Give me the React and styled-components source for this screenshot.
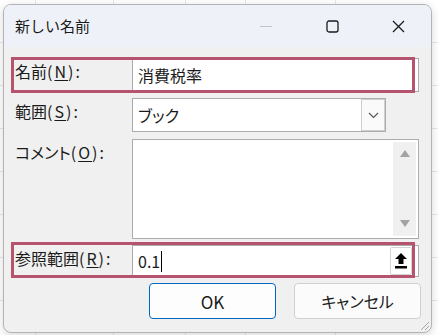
import React from 'react';
import styled, { createGlobalStyle } from 'styled-components';

const GlobalStyle = createGlobalStyle`
  html, body {
    margin: 0;
    padding: 0;
  }
  body {
    width: 438px;
    height: 335px;
    overflow: hidden;
    background-color: #fff;
    background-image:
      linear-gradient(90deg, transparent 35px, #e6e6e6 35px, #e6e6e6 36px, transparent 36px),
      linear-gradient(90deg, transparent 113px, #e6e6e6 113px, #e6e6e6 114px, transparent 114px),
      linear-gradient(90deg, transparent 185px, #e6e6e6 185px, #e6e6e6 186px, transparent 186px),
      linear-gradient(90deg, transparent 245px, #e6e6e6 245px, #e6e6e6 246px, transparent 246px),
      linear-gradient(90deg, transparent 335px, #e6e6e6 335px, #e6e6e6 336px, transparent 336px),
      repeating-linear-gradient(180deg, transparent 0, transparent 42px, #e8e8e8 42px, #e8e8e8 43px);
    font-family: "Noto Sans CJK JP", "Noto Sans", sans-serif;
    color: #1a1a1a;
  }
`;

const Dialog = styled.div`
  position: relative;
  box-sizing: border-box;
  margin: 4px 0 0 3px;
  width: 429px;
  height: 329px;
  border: 1px solid #b4b4b4;
  border-radius: 8px;
  background: #f0f0f0;
  box-shadow: 0 2px 8px rgba(0, 0, 0, 0.16);
  overflow: hidden;
  display: flex;
  flex-direction: column;
`;

const TitleBar = styled.div`
  height: 42px;
  flex: none;
  display: flex;
  align-items: center;
  background: #eef2f8;
`;

const Title = styled.div`
  flex: 1;
  padding-left: 11px;
  font-size: 15px;
  line-height: 20px;
  color: #1a1a1a;
`;

const CaptionButton = styled.div`
  width: 66px;
  height: 42px;
  display: flex;
  align-items: center;
  justify-content: center;
  color: ${(p) => (p.$disabled ? '#c4c4c4' : '#1a1a1a')};
`;

const Body = styled.div`
  flex: 1;
  padding: 11px 10px 0 11px;
  display: flex;
  flex-direction: column;
`;

const Row = styled.div`
  position: relative;
  display: flex;
  align-items: flex-start;
  height: ${(p) => p.$h}px;
  margin-top: ${(p) => p.$mt || 0}px;
`;

const Label = styled.div`
  width: 117px;
  flex: none;
  padding-top: 3px;
  font-size: 16px;
  line-height: 20px;
  white-space: nowrap;
  font-feature-settings: "palt";
`;

const Key = styled.span`
  letter-spacing: 2px;

  u {
    text-decoration: underline;
    text-underline-offset: 2px;
  }
`;

const Field = styled.div`
  box-sizing: border-box;
  width: ${(p) => p.$w || 287}px;
  height: 100%;
  border: 1px solid #acacac;
  background: #fff;
  display: flex;
  align-items: center;
  font-size: 16px;
  line-height: 20px;
`;

const Value = styled.span`
  flex: 1;
  padding-left: 5px;
  display: flex;
  align-items: center;
  font-feature-settings: "palt";
`;

const Caret = styled.span`
  display: inline-block;
  width: 1px;
  height: 21px;
  margin-left: 1px;
  background: #000;
`;

const DropButton = styled.div`
  box-sizing: border-box;
  width: 24px;
  height: 32px;
  border: 1px solid #cfcfcf;
  background: #fafafa;
  display: flex;
  align-items: center;
  justify-content: center;
`;

const ScrollBar = styled.div`
  width: 23px;
  align-self: stretch;
  margin: 2px 2px 2px 0;
  background: #f0f0f0;
  display: flex;
  flex-direction: column;
  justify-content: space-between;
  align-items: center;
  padding: 8px 0 9px;
  box-sizing: border-box;
`;

const RefButton = styled.div`
  box-sizing: border-box;
  width: 22px;
  height: 28px;
  margin-right: 6px;
  border: 1px solid #d4d4d4;
  border-radius: 2px;
  background: #fff;
  display: flex;
  align-items: center;
  justify-content: center;
`;

const Highlight = styled.div`
  position: absolute;
  left: -4px;
  top: ${(p) => p.$top}px;
  width: 404px;
  height: 36px;
  box-sizing: border-box;
  border: 3px solid #b6546f;
  pointer-events: none;
`;

const Buttons = styled.div`
  display: flex;
  justify-content: flex-end;
  gap: 18px;
  margin-top: 6px;
`;

const Button = styled.div`
  box-sizing: border-box;
  width: 127px;
  height: 36px;
  border-radius: 4px;
  border: 1px solid ${(p) => (p.$primary ? '#0067c0' : '#d0d0d0')};
  background: ${(p) => (p.$primary ? '#fdfdfd' : '#fbfbfb')};
  display: flex;
  align-items: center;
  justify-content: center;
  font-size: ${(p) => (p.$primary ? 17 : 16)}px;
  font-feature-settings: "palt";
  color: #1a1a1a;
`;

const Grip = styled.svg`
  position: absolute;
  right: 1px;
  bottom: 1px;
`;

export default function App() {
  return (
    <>
      <GlobalStyle />
      <Dialog>
        <TitleBar>
          <Title>新しい名前</Title>
          <CaptionButton $disabled>
            <svg width="12" height="12" viewBox="0 0 12 12">
              <path d="M0 6.5h12" stroke="currentColor" strokeWidth="1" />
            </svg>
          </CaptionButton>
          <CaptionButton>
            <svg width="13" height="13" viewBox="0 0 13 13">
              <rect x="1" y="1" width="11" height="11" rx="2" fill="none" stroke="currentColor" strokeWidth="1.3" />
            </svg>
          </CaptionButton>
          <CaptionButton>
            <svg width="13" height="13" viewBox="0 0 13 13">
              <path d="M1 1l11 11M12 1L1 12" stroke="currentColor" strokeWidth="1.3" />
            </svg>
          </CaptionButton>
        </TitleBar>
        <Body>
          <Row $h={34}>
            <Label>
              名前<Key>(<u>N</u>):</Key>
            </Label>
            <Field>
              <Value>消費税率</Value>
            </Field>
            <Highlight $top={-1} />
          </Row>
          <Row $h={34} $mt={6}>
            <Label>
              範囲<Key>(<u>S</u>):</Key>
            </Label>
            <Field $w={254}>
              <Value>ブック</Value>
              <DropButton>
                <svg width="11" height="7" viewBox="0 0 11 7">
                  <path d="M1 1l4.5 4.5L10 1" fill="none" stroke="#555" strokeWidth="1.2" />
                </svg>
              </DropButton>
            </Field>
          </Row>
          <Row $h={100} $mt={7}>
            <Label>
              コメント<Key>(<u>O</u>):</Key>
            </Label>
            <Field>
              <Value />
              <ScrollBar>
                <svg width="10" height="7" viewBox="0 0 10 7">
                  <path d="M5 0L10 7H0z" fill="#a3a3a3" />
                </svg>
                <svg width="10" height="7" viewBox="0 0 10 7">
                  <path d="M0 0h10L5 7z" fill="#a3a3a3" />
                </svg>
              </ScrollBar>
            </Field>
          </Row>
          <Row $h={32} $mt={6}>
            <Label>
              参照範囲<Key>(<u>R</u>):</Key>
            </Label>
            <Field>
              <Value>
                0.1
                <Caret />
              </Value>
              <RefButton>
                <svg width="12" height="16" viewBox="0 0 12 16">
                  <path d="M6 0L12 6H8.5V11H3.5V6H0z" fill="#000" />
                  <rect x="0" y="13" width="12" height="2.5" fill="#000" />
                </svg>
              </RefButton>
            </Field>
            <Highlight $top={-3} />
          </Row>
          <Buttons>
            <Button $primary>OK</Button>
            <Button>キャンセル</Button>
          </Buttons>
        </Body>
        <Grip width="12" height="12" viewBox="0 0 12 12">
          <path d="M11 3L3 11M11 7L7 11" stroke="#a8a8a8" strokeWidth="1" />
        </Grip>
      </Dialog>
    </>
  );
}
